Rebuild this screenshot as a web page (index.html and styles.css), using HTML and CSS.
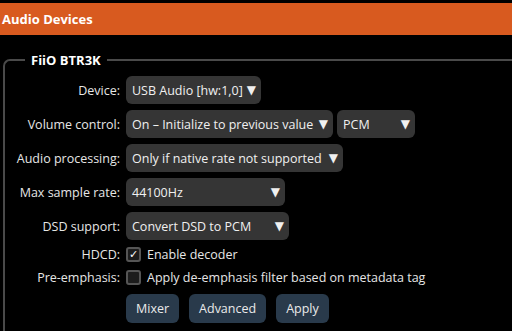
FILE: index.html
```html
<!DOCTYPE html>
<html lang="en">
<head>
    <meta charset="UTF-8">
    <meta name="viewport" content="width=device-width, initial-scale=1.0">
    <title>Audio Devices</title>
    <link rel="stylesheet" href="styles.css">
</head>
<body>
    <div class="titlebar">Audio Devices</div>
    <div class="content">
        <fieldset class="device">
            <legend>FiiO BTR3K</legend>

            <div class="row">
                <span class="label">Device:</span>
                <div class="select w-device"><span>USB Audio [hw:1,0]</span><span class="arrow">&#9660;</span></div>
            </div>
            <div class="row">
                <span class="label">Volume control:</span>
                <div class="select w-volume"><span>On &ndash; Initialize to previous value</span><span class="arrow">&#9660;</span></div>
                <div class="select w-mixer"><span>PCM</span><span class="arrow">&#9660;</span></div>
            </div>
            <div class="row">
                <span class="label">Audio processing:</span>
                <div class="select w-processing"><span>Only if native rate not supported</span><span class="arrow">&#9660;</span></div>
            </div>
            <div class="row">
                <span class="label">Max sample rate:</span>
                <div class="select w-rate"><span>44100Hz</span><span class="arrow">&#9660;</span></div>
            </div>
            <div class="row">
                <span class="label">DSD support:</span>
                <div class="select w-dsd"><span>Convert DSD to PCM</span><span class="arrow">&#9660;</span></div>
            </div>

            <div class="row check-row first-check">
                <span class="label">HDCD:</span>
                <label class="check"><span class="box checked">&#10003;</span>Enable decoder</label>
            </div>
            <div class="row check-row">
                <span class="label">Pre-emphasis:</span>
                <label class="check"><span class="box"></span>Apply de-emphasis filter based on metadata tag</label>
            </div>

            <div class="buttons">
                <button>Mixer</button>
                <button>Advanced</button>
                <button>Apply</button>
            </div>
        </fieldset>
    </div>
</body>
</html>
```

FILE: styles.css
```css
* {
    margin: 0;
    padding: 0;
    box-sizing: border-box;
    font-family: 'Open Sans', 'Noto Sans', sans-serif;
}

body {
    background: #000;
    color: #e6e6e6;
    font-size: 12.5px;
    width: 512px;
    height: 331px;
    overflow: hidden;
}

.titlebar {
    margin-top: 3px;
    height: 32px;
    background: #d85a1f;
    color: #fff;
    font-weight: 700;
    font-size: 13px;
    line-height: 32px;
    padding-left: 2px;
}

.content {
    padding-top: 16px;
    padding-left: 3px;
}

/* right edge of the group box is cut off by the window */
.device {
    border: 2px solid #4a4a4a;
    border-right: none;
    border-radius: 7px 0 0 7px;
    padding: 7px 0 20px 11px;
}

legend {
    margin-left: 9px;
    padding: 0 6px;
    font-weight: 700;
    font-size: 13px;
    color: #fff;
    line-height: 18px;
}

.row {
    display: flex;
    align-items: center;
    gap: 4px;
    height: 28px;
    margin-bottom: 6px;
}

.label {
    width: 104px;
    margin-right: 2px;
    text-align: right;
    white-space: nowrap;
}

.select {
    height: 28px;
    background: #353535;
    border-radius: 6px;
    display: flex;
    align-items: center;
    justify-content: space-between;
    padding: 0 5px 0 6px;
    white-space: nowrap;
    color: #f0f0f0;
}

.arrow {
    font-family: 'DejaVu Sans', sans-serif;
    font-size: 12px;
    margin-left: 1px;
}

.w-device { width: 135px; }
.w-volume { width: 207px; }
.w-mixer { width: 78px; }
.w-processing { width: 217px; }
.w-rate { width: 159px; }
.w-dsd { width: 163px; }

.check-row {
    height: 23px;
    margin-bottom: 0;
}

.first-check {
    margin-top: -3px;
}

.check {
    display: flex;
    align-items: center;
    gap: 6px;
    white-space: nowrap;
}

.box {
    width: 15px;
    height: 15px;
    border: 2px solid #555;
    border-radius: 3px;
    background: #1c1c1c;
    display: flex;
    align-items: center;
    justify-content: center;
    font-family: 'DejaVu Sans', sans-serif;
    font-size: 11px;
    font-weight: 700;
    color: #fff;
    line-height: 1;
}

.buttons {
    display: flex;
    gap: 10px;
    margin-top: 5px;
    padding-left: 110px;
}

button {
    height: 29px;
    padding: 0 10px;
    background: #293a4b;
    color: #eaeaea;
    border: none;
    border-radius: 6px;
    font-size: 12.5px;
}
```
